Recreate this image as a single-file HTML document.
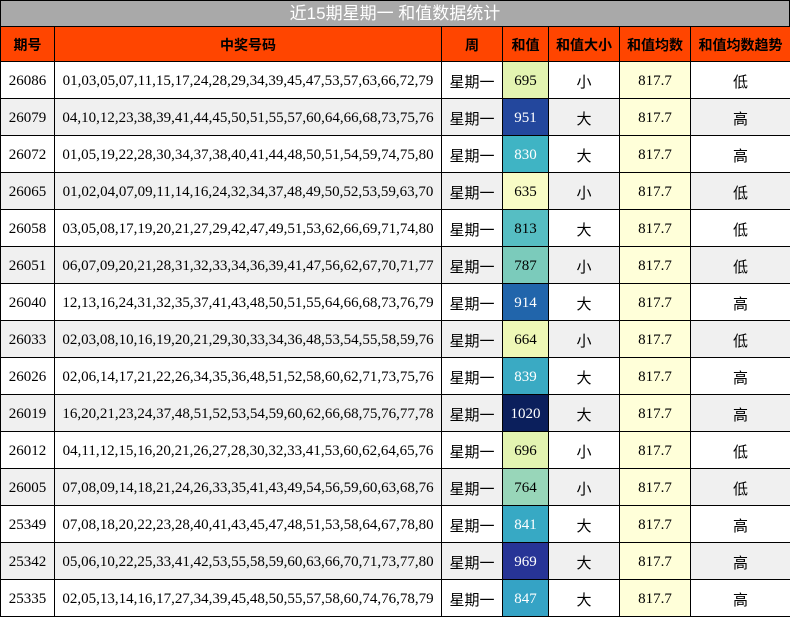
<!DOCTYPE html>
<html><head><meta charset="utf-8"><style>
*{margin:0;padding:0;box-sizing:border-box}
body{width:790px;height:617px;background:#fff;font-family:"Liberation Serif","Noto Sans CJK SC",serif;overflow:hidden}
.title{position:absolute;left:0;top:0;width:790px;height:27px;background:#a9a9a9;border:1px solid #000;color:#fff;font-size:17px;text-align:center;line-height:25px;font-family:"Liberation Sans","Noto Sans CJK SC",sans-serif}
table{position:absolute;left:0;top:26px;border-collapse:collapse;table-layout:fixed;width:790px}
td,th{border:1px solid #000;text-align:center;font-size:15px;height:37px;padding:3px 0 0 0;white-space:nowrap;overflow:hidden}
th{background:#ff4500;font-family:"Liberation Sans","Noto Sans CJK SC",sans-serif;font-weight:bold;font-size:14px;height:35px;padding-top:1px}
tr.g td{background:#f0f0f0}
td.a{background:#ffffd9 !important}
td.w{color:#fff}
</style></head><body>
<div class="title">近15期星期一 和值数据统计</div>
<table>
<colgroup><col style="width:54px"><col style="width:387px"><col style="width:61px"><col style="width:46px"><col style="width:71px"><col style="width:71px"><col style="width:100px"></colgroup>
<tr><th>期号</th><th>中奖号码</th><th>周</th><th>和值</th><th>和值大小</th><th>和值均数</th><th>和值均数趋势</th></tr>
<tr><td>26086</td><td>01,03,05,07,11,15,17,24,28,29,34,39,45,47,53,57,63,66,72,79</td><td>星期一</td><td style="background:#e3f4b1">695</td><td>小</td><td class="a">817.7</td><td>低</td></tr>
<tr class="g"><td>26079</td><td>04,10,12,23,38,39,41,44,45,50,51,55,57,60,64,66,68,73,75,76</td><td>星期一</td><td class="w" style="background:#23479d">951</td><td>大</td><td class="a">817.7</td><td>高</td></tr>
<tr><td>26072</td><td>01,05,19,22,28,30,34,37,38,40,41,44,48,50,51,54,59,74,75,80</td><td>星期一</td><td class="w" style="background:#3fb4c4">830</td><td>大</td><td class="a">817.7</td><td>高</td></tr>
<tr class="g"><td>26065</td><td>01,02,04,07,09,11,14,16,24,32,34,37,48,49,50,52,53,59,63,70</td><td>星期一</td><td style="background:#f8fcc6">635</td><td>小</td><td class="a">817.7</td><td>低</td></tr>
<tr><td>26058</td><td>03,05,08,17,19,20,21,27,29,42,47,49,51,53,62,66,69,71,74,80</td><td>星期一</td><td style="background:#56bec3">813</td><td>大</td><td class="a">817.7</td><td>低</td></tr>
<tr class="g"><td>26051</td><td>06,07,09,20,21,28,31,32,33,34,36,39,41,47,56,62,67,70,71,77</td><td>星期一</td><td style="background:#7bcbbb">787</td><td>小</td><td class="a">817.7</td><td>低</td></tr>
<tr><td>26040</td><td>12,13,16,24,31,32,35,37,41,43,48,50,51,55,64,66,68,73,76,79</td><td>星期一</td><td class="w" style="background:#2165ab">914</td><td>大</td><td class="a">817.7</td><td>高</td></tr>
<tr class="g"><td>26033</td><td>02,03,08,10,16,19,20,21,29,30,33,34,36,48,53,54,55,58,59,76</td><td>星期一</td><td style="background:#eef8b6">664</td><td>小</td><td class="a">817.7</td><td>低</td></tr>
<tr><td>26026</td><td>02,06,14,17,21,22,26,34,35,36,48,51,52,58,60,62,71,73,75,76</td><td>星期一</td><td class="w" style="background:#3aaac3">839</td><td>大</td><td class="a">817.7</td><td>高</td></tr>
<tr class="g"><td>26019</td><td>16,20,21,23,24,37,48,51,52,53,54,59,60,62,66,68,75,76,77,78</td><td>星期一</td><td class="w" style="background:#0b1f5c">1020</td><td>大</td><td class="a">817.7</td><td>高</td></tr>
<tr><td>26012</td><td>04,11,12,15,16,20,21,26,27,28,30,32,33,41,53,60,62,64,65,76</td><td>星期一</td><td style="background:#e3f4b1">696</td><td>小</td><td class="a">817.7</td><td>低</td></tr>
<tr class="g"><td>26005</td><td>07,08,09,14,18,21,24,26,33,35,41,43,49,54,56,59,60,63,68,76</td><td>星期一</td><td style="background:#98d6b9">764</td><td>小</td><td class="a">817.7</td><td>低</td></tr>
<tr><td>25349</td><td>07,08,18,20,22,23,28,40,41,43,45,47,48,51,53,58,64,67,78,80</td><td>星期一</td><td class="w" style="background:#37a9c4">841</td><td>大</td><td class="a">817.7</td><td>高</td></tr>
<tr class="g"><td>25342</td><td>05,06,10,22,25,33,41,42,53,55,58,59,60,63,66,70,71,73,77,80</td><td>星期一</td><td class="w" style="background:#273496">969</td><td>大</td><td class="a">817.7</td><td>高</td></tr>
<tr><td>25335</td><td>02,05,13,14,16,17,27,34,39,45,48,50,55,57,58,60,74,76,78,79</td><td>星期一</td><td class="w" style="background:#35a3c5">847</td><td>大</td><td class="a">817.7</td><td>高</td></tr>
</table>
</body></html>
